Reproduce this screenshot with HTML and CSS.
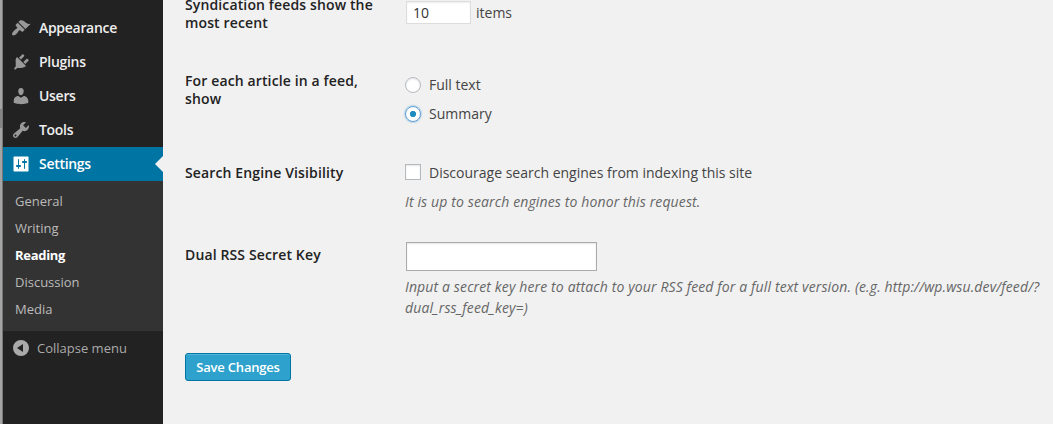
FILE: index.html
```html
<!DOCTYPE html>
<html lang="en">
<head>
<meta charset="utf-8">
<title>Reading Settings</title>
<link rel="stylesheet" href="styles.css">
</head>
<body>
<div class="edge"><div class="edge-mark"></div></div>
<nav class="sidebar">
  <ul class="menu">
    <li class="item"><svg class="icon" viewBox="0 0 20 20"><path d="M14.48 11.06 7.41 3.99l1.5-1.5c.5-.56 2.3-.47 3.51.32 1.21.8 1.43 1.28 2.91 2.1 1.18.64 2.45 1.26 4.45.85zm-.71.71L6.7 4.7 4.93 6.47a.996.996 0 0 0 0 1.41l1.06 1.06c.39.39.39 1.03 0 1.42-.6.6-1.43 1.11-2.21 1.69-.35.26-.7.53-1.01.84C1.43 14.23.4 16.08 1.4 17.07c.99 1 2.84-.03 4.18-1.36.31-.31.58-.66.85-1.02.57-.78 1.08-1.61 1.69-2.21a.996.996 0 0 1 1.41 0l1.06 1.06c.39.39 1.02.39 1.41 0z"/></svg><span>Appearance</span></li>
    <li class="item"><svg class="icon" viewBox="0 0 20 20"><path d="M13.11 4.36 9.87 7.6 8 5.73l3.24-3.24c.35-.34 1.05-.2 1.56.32.52.51.66 1.21.31 1.55zm-8 1.77.91-1.12 9.01 9.01-1.19.84c-.71.71-2.63 1.16-3.82 1.16H6.14L4.9 17.26a1 1 0 0 1-1.41 0 1 1 0 0 1 0-1.42l1.24-1.24v-3.77c0-1.19-.33-3.99.38-4.7zm7.26 3.97 3.24-3.24c.34-.35 1.04-.21 1.55.31.52.51.66 1.21.31 1.55l-3.24 3.25z"/></svg><span>Plugins</span></li>
    <li class="item"><svg class="icon" viewBox="0 0 20 20"><path d="M10 9.25c-2.27 0-2.73-3.44-2.73-3.44C7 4.02 7.82 2 9.97 2c2.16 0 2.98 2.02 2.71 3.81 0 0-.41 3.44-2.68 3.44zm0 2.57L12.72 10c2.39 0 4.52 2.33 4.52 4.53v2.49s-3.65 1.13-7.24 1.13c-3.65 0-7.24-1.13-7.24-1.13v-2.49c0-2.25 1.94-4.48 4.47-4.48z"/></svg><span>Users</span></li>
    <li class="item"><svg class="icon" viewBox="0 0 20 20"><path d="M16.68 9.77a4.543 4.543 0 0 1-4.95.99l-5.41 6.52c-.99.99-2.59.99-3.58 0s-.99-2.59 0-3.57l6.52-5.42c-.68-1.65-.35-3.61.99-4.95 1.28-1.28 3.12-1.62 4.72-1.06l-2.89 2.89 2.82 2.82 2.86-2.87c.53 1.58.18 3.39-1.08 4.65zM3.81 16.21c.4.39 1.04.39 1.43 0 .4-.4.4-1.04 0-1.43-.39-.4-1.03-.4-1.43 0a1.02 1.02 0 0 0 0 1.43z"/></svg><span>Tools</span></li>
    <li class="item current"><svg class="icon" viewBox="0 0 20 20"><path fill-rule="evenodd" d="M17.5 17V3c0-.3-.2-.5-.5-.5H3c-.3 0-.5.200-.5.500v14c0 .3.200.500.500.500h14c.3 0 .5-.2.500-.500zM8 11h1c.55 0 1 .45 1 1s-.45 1-1 1H8v1.500c0 .28-.22.5-.5.5s-.5-.22-.5-.5V13H6c-.55 0-1-.45-1-1s.45-1 1-1h1V5.500c0-.28.22-.5.5-.5s.5.220.5.500zm5-2h-1c-.55 0-1-.45-1-1s.45-1 1-1h1V5.500c0-.28.22-.5.5-.5s.5.220.5.500V7h1c.55 0 1 .45 1 1s-.45 1-1 1h-1v5.500c0 .28-.22.5-.5.5s-.5-.22-.5-.5z"/></svg><span>Settings</span><svg class="arrow" viewBox="0 0 8 16"><path d="M8 0v16L0 8z"/></svg></li>
  </ul>
  <ul class="submenu">
    <li>General</li><li>Writing</li><li class="active">Reading</li><li>Discussion</li><li>Media</li>
  </ul>
  <div class="collapse"><svg viewBox="0 0 16 16"><path fill-rule="evenodd" d="M8 0a8 8 0 1 1 0 16A8 8 0 0 1 8 0zM10 4 4 8l6 4z"/></svg><span>Collapse menu</span></div>
</nav>
<main class="content">
  <section class="row feeds">
    <div class="label">Syndication feeds show the most recent</div>
    <div class="field count-field"><input class="count" type="text" value="10"><span>items</span></div>
  </section>
  <section class="row article">
    <div class="label">For each article in a feed, show</div>
    <div class="field">
      <label class="choice"><span class="radio"></span><span>Full text</span></label>
      <label class="choice"><span class="radio on"></span><span>Summary</span></label>
    </div>
  </section>
  <section class="row visibility">
    <div class="label">Search Engine Visibility</div>
    <div class="field">
      <label class="choice"><span class="check"></span><span>Discourage search engines from indexing this site</span></label>
      <p class="hint">It is up to search engines to honor this request.</p>
    </div>
  </section>
  <section class="row key">
    <div class="label">Dual RSS Secret Key</div>
    <div class="field">
      <input class="secret" type="text">
      <p class="hint">Input a secret key here to attach to your RSS feed for a full text version. (e.g. http://wp.wsu.dev/feed/?<br>dual_rss_feed_key=)</p>
    </div>
  </section>
  <button class="save">Save Changes</button>
</main>
</body>
</html>
```
FILE: styles.css
```css
* { box-sizing: border-box; }
body {
  margin: 0;
  display: flex;
  height: 424px;
  overflow: hidden;
  background: #f1f1f1;
  color: #444;
  font: 14px/20px "Open Sans", sans-serif;
}
ul { list-style: none; margin: 0; padding: 0; }
p { margin: 0; }

.edge { width: 3px; flex: none; background: #a5a5a5; border-right: 1px solid #777; padding-top: 109px; }
.edge-mark { height: 19px; background: #858585; }

.sidebar { width: 160px; flex: none; background: #222; }
.menu { padding-top: 11px; }
.item {
  position: relative;
  display: flex;
  align-items: center;
  height: 34px;
  padding-left: 8px;
  gap: 8px;
  color: #eee;
  font-weight: 600;
  font-size: 14px;
  letter-spacing: -0.3px;
}
.icon { width: 20px; height: 20px; fill: #999; }
.current { background: #0074a2; color: #fff; }
.current .icon { fill: #fff; }
.arrow { position: absolute; right: 0; top: 9px; width: 8px; height: 16px; fill: #f1f1f1; }
.submenu { height: 150px; padding: 7px 12px; background: #333; color: #bbb; font-size: 13px; line-height: 27px; }
.submenu .active { color: #fff; font-weight: 700; letter-spacing: -0.3px; }
.collapse { display: flex; align-items: center; height: 34px; padding-left: 10px; gap: 8px; color: #aaa; font-size: 13px; }
.collapse svg { width: 16px; height: 16px; fill: #aaa; }

.content { flex: 1; padding-left: 22px; }
.row { display: grid; grid-template-columns: 220px 1fr; }
.label { color: #222; font-weight: 600; line-height: 18px; width: 200px; padding-top: 1px; letter-spacing: 0.13px; }
.feeds { height: 71px; margin-top: -5px; }
.count-field { display: flex; align-items: flex-start; gap: 5px; padding: 6px 0 0 1px; }
.count-field span { padding-top: 2px; }
.count { width: 65px; height: 23px; border: 1px solid #ddd; background: #fff; box-shadow: inset 0 1px 2px rgba(0,0,0,.07); padding: 0 6px; font: inherit; color: #333; }
.article { height: 92px; padding-top: 5px; }
.article .field { padding-top: 4px; }
.article .choice + .choice { margin-top: 9px; }
.choice { display: flex; align-items: center; gap: 8px; height: 20px; }
.radio, .check { width: 16px; height: 16px; flex: none; background: #fff; border: 1px solid #b4b9be; box-shadow: inset 0 1px 2px rgba(0,0,0,.1); }
.check { margin-bottom: 2px; }
.radio { border-radius: 50%; }
.radio.on { border-color: #5b9dd9; box-shadow: 0 0 2px rgba(30,140,190,.8); background: radial-gradient(circle at center, #1e8cbe 0 2.8px, #fff 3.4px); }
.visibility { height: 82px; padding-top: 5px; }
.hint { color: #666; font-style: italic; line-height: 21px; letter-spacing: 0.13px; white-space: nowrap; }
.visibility .hint { margin-top: 8px; }
.key { height: 113px; padding-top: 5px; }
.key .field { margin-top: -3px; }
.secret { display: block; width: 191px; height: 29px; margin-left: 1px; border: 1px solid #aaa; background: #fff; box-shadow: inset 0 1px 2px rgba(0,0,0,.1); }
.key .hint { margin-top: 5px; }
.save { display: block; width: 106px; height: 28px; padding: 0; border: 1px solid #0074a2; border-radius: 3px; background: #2ea2cc; color: #fff; box-shadow: inset 0 1px 0 rgba(120,200,230,.5); font: 600 13px/26px "Open Sans", sans-serif; letter-spacing: -0.2px; }
```
